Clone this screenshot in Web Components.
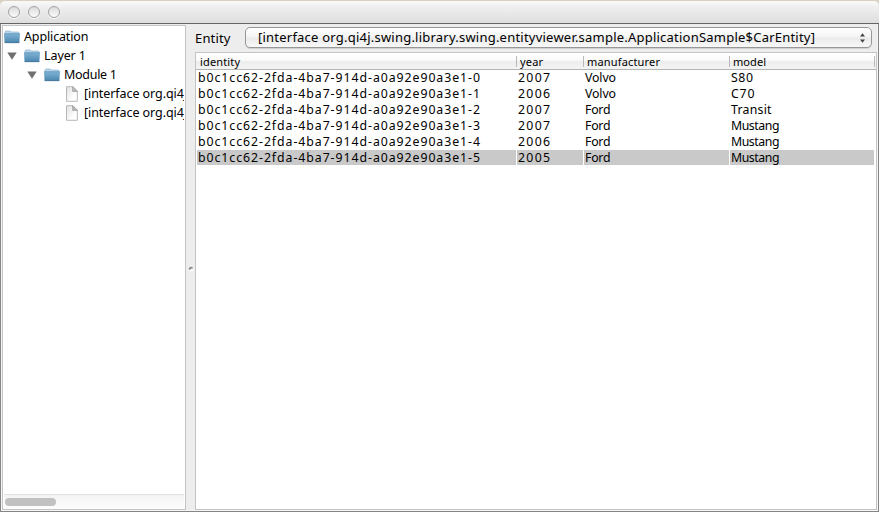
<!DOCTYPE html>
<html lang="en">
<head>
<meta charset="utf-8">
<title>Entity viewer</title>
<style>
html,body{margin:0;height:100%;overflow:hidden;background:#d9d0c2}
body{font:12.5px/16px "Noto Sans","Open Sans",sans-serif;color:#000}
</style>
</head>
<body>
<app-window>
  <split-pane>
    <tree-panel slot="left">
      <tree-row level="0" icon="folder" w="64.5">Application</tree-row>
      <tree-row level="1" icon="folder" w="42" open>Layer 1</tree-row>
      <tree-row level="2" icon="folder" w="53" open>Module 1</tree-row>
      <tree-row level="3" icon="file" w="103">[interface org.qi4j</tree-row>
      <tree-row level="3" icon="file" w="103">[interface org.qi4j</tree-row>
    </tree-panel>
    <entity-picker slot="right" label="Entity"><fit-text w="557">[interface org.qi4j.swing.library.swing.entityviewer.sample.ApplicationSample$CarEntity]</fit-text></entity-picker>
    <data-table slot="right"></data-table>
  </split-pane>
</app-window>
<script>
class Base extends HTMLElement{
  constructor(){super();this.attachShadow({mode:'open'}).innerHTML=this.view();}
  view(){return '';}
}
customElements.define('app-window',class extends Base{
  view(){return `<style>
  :host{display:flex;flex-direction:column;box-sizing:border-box;height:512px;width:879px;padding-top:1px}
  header{box-sizing:border-box;height:23px;flex:none;display:flex;gap:8px;padding:5px 0 0 8px;border-radius:5px 5px 0 0;border-bottom:1px solid #656565;background:linear-gradient(#fafafa,#eee 30%,#dedede)}
  i{box-sizing:border-box;width:12px;height:12px;border-radius:50%;border:1px solid #a3a3a3;background:linear-gradient(#dcdcdc,#fafafa);box-shadow:0 1px #f8f8f8}
  main{flex:1;min-height:0;display:flex;background:#ededed;border:1px solid #858585;border-top:0}
  </style><header><i></i><i></i><i></i></header><main><slot></slot></main>`;}
});
customElements.define('split-pane',class extends Base{
  view(){return `<style>
  :host{display:flex;flex:1;min-width:0;box-sizing:border-box;border:1px solid #f5f5f5;border-top:0}
  .l{width:184px;display:flex;flex:none;padding-top:1px;box-sizing:border-box}
  .bar{width:9px;flex:none;display:flex;align-items:center;justify-content:center}
  .bar svg{margin-top:3px}
  .r{flex:1;min-width:0;display:flex;flex-direction:column}
  </style><div class="l"><slot name="left"></slot></div><div class="bar"><svg width="6" height="6" viewBox="0 0 6 6"><circle cx="3" cy="3" r="2.5" fill="#fafafa"/><path d="M.6 3.2A2.4 2.4 0 0 1 5.2 2.2L3 2.8 2 4Z" fill="#8c8c8c"/></svg></div><div class="r"><slot name="right"></slot></div>`;}
});
customElements.define('tree-panel',class extends Base{
  view(){return `<style>
  :host{display:flex;flex-direction:column;flex:1;min-width:0;box-sizing:border-box;border:1px solid #c4c4c4;background:#fff;padding:1px 1px 0 0}
  .rows{flex:1;overflow:hidden}
  .sb{height:15px;flex:none;box-sizing:border-box;margin-left:1px;border-top:1px solid #e1e1e1;background:linear-gradient(#f3f3f3,#fdfdfd);padding:3px 0 0 1px}
  .sb i{display:block;width:51px;height:8px;border-radius:4px;background:#c1c1c1}
  </style><div class="rows"><slot></slot></div><div class="sb"><i></i></div>`;}
});
customElements.define('tree-row',class extends Base{
  view(){
    const l=+this.getAttribute('level');
    const folder=`<svg width="16" height="14" viewBox="0 0 16 14"><defs><linearGradient id="g" x2="0" y2="1"><stop stop-color="#82b4d5"/><stop offset="1" stop-color="#4885af"/></linearGradient></defs><path d="M1.2 4V1.8Q1.2 1 2 1H6.2L7.2 2H14Q14.8 2 14.8 2.8V5H1.2Z" fill="#b9d6ea" stroke="#82aac6" stroke-width=".6"/><path d="M0 3.5H16L15.4 13H.6Z" fill="url(#g)"/><path d="M0 3.8H16" stroke="#6299bc" stroke-width=".8"/><path d="M.8 12.7H15.2" stroke="#48718f" stroke-width=".7"/></svg>`;
    const file=`<svg width="16" height="16" viewBox="0 0 16 16"><defs><linearGradient id="f" x2="1" y2="1"><stop stop-color="#e0e0e0"/><stop offset=".7" stop-color="#fff"/></linearGradient></defs><path d="M2.5 .7H9L13.3 5V15.3H2.5Z" fill="url(#f)" stroke="#b0b0b0" stroke-width=".9"/><path d="M8.6 .7V5.4H13.3Z" fill="#bcbcbc" stroke="#999" stroke-width=".7"/></svg>`;
    return `<style>
    :host{display:flex;align-items:center;height:19px;white-space:nowrap;box-sizing:border-box;padding-left:${l*20+1}px}
    .d{width:10px;height:8px;flex:none;margin-left:-17px;margin-right:7px}
    .i{width:16px;height:16px;flex:none;display:flex;align-items:center;margin-right:4px}
    </style>${this.hasAttribute('open')?'<svg class="d" viewBox="0 0 10 8"><path d="M.3 .5H9.7L5 7.8Z" fill="#707070"/></svg>':''}<span class="i">${this.getAttribute('icon')==='folder'?folder:file}</span><fit-text w="${this.getAttribute('w')}">${this.textContent}</fit-text>`;
  }
});
customElements.define('entity-picker',class extends Base{
  view(){return `<style>
  :host{display:flex;align-items:flex-start;height:28px;flex:none;box-sizing:border-box;padding:3px 5px 0 0;font-size:13px;line-height:19px}
  .lab{width:50px;flex:none;padding-top:2px}
  .box{flex:1;height:21px;box-sizing:border-box;display:flex;align-items:center;justify-content:space-between;padding:0 5px 0 12px;border:1px solid #979797;border-radius:5px;background:linear-gradient(#fff,#f4f4f4 48%,#eaeaea 52%,#f8f8f8);box-shadow:0 1px #d2d2d2}
  </style><span class="lab"><fit-text w="35.5">${this.getAttribute('label')}</fit-text></span><div class="box"><slot></slot><svg width="7" height="12" viewBox="0 0 7 12"><path d="M3.5 1.2 6 4.6H1ZM3.5 10.8 6 7.4H1Z" fill="#444"/></svg></div>`;}
});
customElements.define('data-table',class extends Base{
  view(){
    const rows=[['2007','Volvo','S80'],['2006','Volvo','C70'],['2007','Ford','Transit'],['2007','Ford','Mustang'],['2006','Ford','Mustang'],['2005','Ford','Mustang']];
    const W={'Volvo':31,'Ford':25.5,'S80':22,'C70':23.5,'Transit':40.5,'Mustang':48.5};
    const cell=t=>`<div><fit-text w="${W[t]||32}">${t}</fit-text></div>`;
    return `<style>
    :host{display:block;flex:1;min-height:0;box-sizing:border-box;background:#fff;border:1px solid #c4c4c4;overflow:hidden}
    .r{display:grid;grid-template-columns:320px 67px 146px 144px;height:16px;padding-left:1px;font-size:12.3px;line-height:16px}
    .r div{height:15px;padding-left:1px;border-right:1px solid #fff;box-sizing:border-box}
    .r div:last-child{border-right:0}
    .sel div{background:#c9c9c9}
    .h{box-sizing:border-box;height:17px;font-size:11px;line-height:16px;background:linear-gradient(#fff,#fafafa 45%,#ededed 55%,#f4f4f4);border-bottom:1px solid #b4b4b4}
    .h div{height:11px;margin-top:3px;line-height:11px;padding-left:3px;border-right:1px solid #b9b9b9}
    .h div:last-child{border-right:1px solid #b9b9b9;margin-right:-1px}
    </style><div class="r h"><div><fit-text w="40">identity</fit-text></div><div><fit-text w="23">year</fit-text></div><div><fit-text w="73">manufacturer</fit-text></div><div><fit-text w="33">model</fit-text></div></div>`
    +rows.map((r,i)=>`<div class="r${i===5?' sel':''}"><div><fit-text w="282">b0c1cc62-2fda-4ba7-914d-a0a92e90a3e1-${i}</fit-text></div>${r.map(cell).join('')}</div>`).join('');
  }
});
/* Text tracked so that it fills the width given in its w attribute.
   Defined last, so that it measures with the fonts of its parents. */
customElements.define('fit-text',class extends Base{
  view(){return `<style>:host{display:inline-block;white-space:nowrap}span{display:inline-block;white-space:nowrap}</style><span><slot></slot></span>`;}
  connectedCallback(){
    const s=this.shadowRoot.querySelector('span'),w=parseFloat(this.getAttribute('w'));
    const n=this.textContent.length;
    if(w&&n>1)s.style.letterSpacing=((w-s.getBoundingClientRect().width)/(n-1))+'px';
  }
});
</script>
</body>
</html>
